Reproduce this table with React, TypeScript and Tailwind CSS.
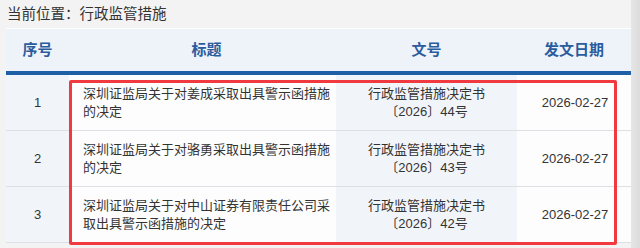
import React from "react"

const rows = [
  { no: 1, title: "深圳证监局关于对姜成采取出具警示函措施的决定", doc: ["行政监管措施决定书", "〔2026〕44号"], date: "2026-02-27" },
  { no: 2, title: "深圳证监局关于对骆勇采取出具警示函措施的决定", doc: ["行政监管措施决定书", "〔2026〕43号"], date: "2026-02-27" },
  { no: 3, title: "深圳证监局关于对中山证券有限责任公司采取出具警示函措施的决定", doc: ["行政监管措施决定书", "〔2026〕42号"], date: "2026-02-27" },
]

const font = { fontFamily: '"Liberation Sans", "Noto Sans CJK SC", sans-serif' }

export default function App() {
  return (
    <div className="relative flex h-[248px] w-[640px] overflow-hidden bg-[#f3f3f3] text-[#333]" style={font}>
      <div className="flex w-[631px] flex-col">
        <div className="h-[28px] pl-[7px] text-[14.5px] leading-[28px] text-[#333]">当前位置：行政监管措施</div>

        <div className="ml-[6px] w-[625px]">
          {/* header */}
          <div className="grid h-[43px] grid-cols-[63px_267px_181px_114px] items-center border-t border-white bg-[#eef3f9] text-[15px] font-bold text-[#2a5c9e]">
            <div className="text-center">序号</div>
            <div className="pl-[8px] text-center">标题</div>
            <div className="text-center">文号</div>
            <div className="text-center">发文日期</div>
          </div>
          <div className="h-[4px] bg-[#1f5fa6]" />

          {rows.map((r) => (
            <div
              key={r.no}
              className="grid h-[56px] grid-cols-[63px_267px_181px_114px] border-b border-[#dcdfe3] text-[13px] leading-[18px] text-[#333]"
            >
              <div className="flex items-center justify-center bg-[#f1f5fa]">{r.no}</div>
              <div className="flex items-center bg-[#fdfdfe] pl-[14px] pr-[3px]">
                <span className="w-[250px]">{r.title}</span>
              </div>
              <div className="flex flex-col items-center justify-center bg-[#f1f5fa]">
                <span>{r.doc[0]}</span>
                <span>{r.doc[1]}</span>
              </div>
              <div className="flex items-center justify-center bg-[#fdfdfe] pl-[2px]">{r.date}</div>
            </div>
          ))}
        </div>
      </div>

      <div className="w-[9px] bg-gradient-to-r from-[#e6e6e6] to-[#dcdcdc]" />

      {/* red annotation box */}
      <div className="absolute left-[69px] top-[80px] h-[165px] w-[548px] rounded-[2px] border-[3px] border-[#f03a40]" />
    </div>
  )
}
